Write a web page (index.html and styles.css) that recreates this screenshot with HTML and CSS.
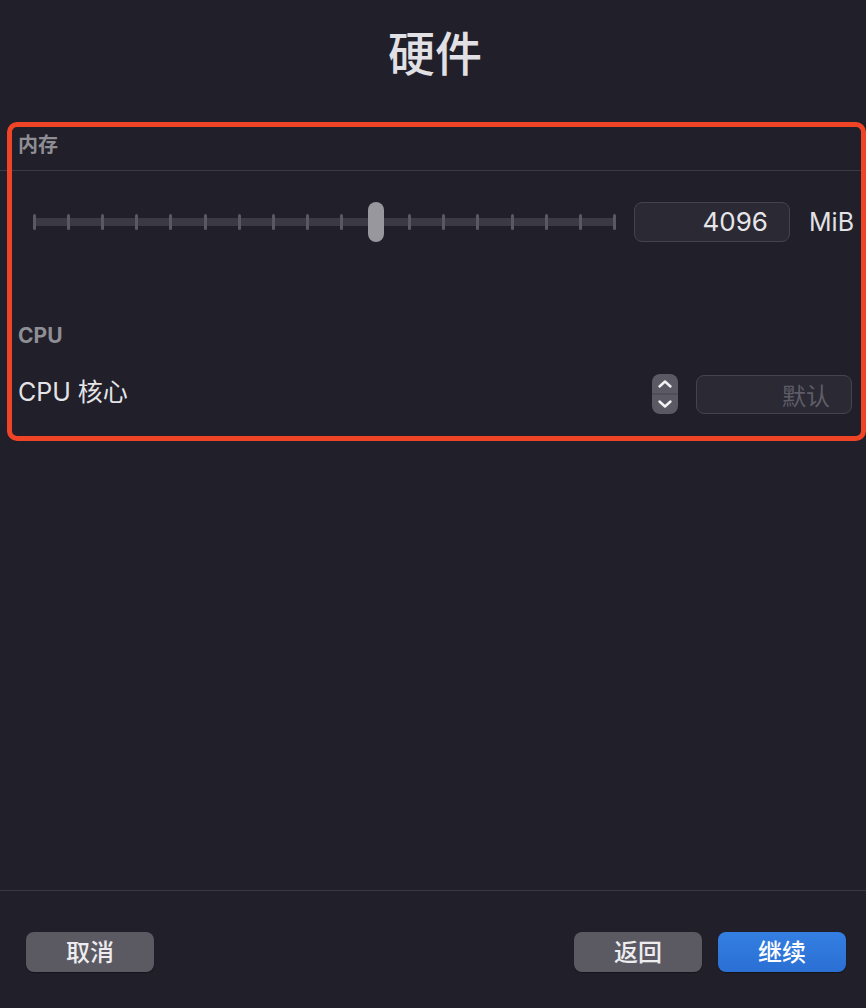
FILE: index.html
```html
<!DOCTYPE html>
<html lang="zh-CN">
<head>
<meta charset="utf-8">
<title>硬件</title>
<link rel="stylesheet" href="styles.css">
</head>
<body>
<div class="window">
  <header class="title">硬件</header>

  <section class="section-head">
    <div class="section-label">内存</div>
  </section>

  <div class="mem-row">
    <div class="slider">
      <div class="track"></div>
      <div class="ticks">
        <span class="tick"></span><span class="tick"></span><span class="tick"></span>
        <span class="tick"></span><span class="tick"></span><span class="tick"></span>
        <span class="tick"></span><span class="tick"></span><span class="tick"></span>
        <span class="tick"></span><span class="tick"></span><span class="tick"></span>
        <span class="tick"></span><span class="tick"></span><span class="tick"></span>
        <span class="tick"></span><span class="tick"></span><span class="tick"></span>
      </div>
      <div class="thumb" style="left: calc(1.5px + (100% - 3px) * 10 / 17 - 8px);"></div>
    </div>
    <div class="field field-value">4096</div>
    <div class="unit">MiB</div>
  </div>

  <div class="cpu-label">CPU</div>

  <div class="cpu-row">
    <div class="cpu-name">CPU 核心</div>
    <div class="stepper">
      <svg width="26" height="40" viewBox="0 0 26 40">
        <rect x="0" y="0" width="26" height="40" rx="8" fill="#5b5a64"/>
        <line x1="0" y1="20" x2="26" y2="20" stroke="#46454f" stroke-width="1"/>
        <path d="M7.5 12.5 L13 7.5 L18.5 12.5" fill="none" stroke="#f2f2f4" stroke-width="2.4" stroke-linecap="round" stroke-linejoin="round"/>
        <path d="M7.5 27.5 L13 32.5 L18.5 27.5" fill="none" stroke="#f2f2f4" stroke-width="2.4" stroke-linecap="round" stroke-linejoin="round"/>
      </svg>
    </div>
    <div class="field field-placeholder">默认</div>
  </div>

  <div class="spacer"></div>

  <footer class="footer">
    <button class="btn btn-gray">取消</button>
    <div class="footer-right">
      <button class="btn btn-gray">返回</button>
      <button class="btn btn-blue">继续</button>
    </div>
  </footer>

  <div class="highlight"></div>
</div>
</body>
</html>
```

FILE: styles.css
```css
* { box-sizing: border-box; }

html, body {
  margin: 0;
  padding: 0;
  height: 100%;
  background: #201f2a;
}

body {
  font-family: "Inter", "Noto Sans CJK SC", sans-serif;
  color: #e3e2e6;
}

.window {
  position: relative;
  height: 1008px;
  display: flex;
  flex-direction: column;
}

.title {
  height: 108px;
  line-height: 102px;
  text-align: center;
  font-family: "Noto Sans CJK SC", sans-serif;
  font-size: 47px;
  font-weight: 500;
  color: #e1e0e4;
  padding-left: 4px;
}

.section-head {
  height: 63px;
  display: flex;
  align-items: flex-end;
  padding: 0 0 12px 18px;
  border-bottom: 1px solid #3c3b45;
}

.section-label {
  font-family: "Noto Sans CJK SC", sans-serif;
  font-size: 20px;
  line-height: 28px;
  font-weight: 700;
  color: #8f8e94;
}

.mem-row {
  margin-top: 31px;
  height: 40px;
  display: flex;
  align-items: center;
  padding: 0 0 0 33px;
}

.slider {
  position: relative;
  flex: 0 0 583px;
  height: 40px;
}

.track {
  position: absolute;
  left: 0;
  right: 0;
  top: 16px;
  height: 8px;
  background: #3a3944;
  border-radius: 2px;
}

.ticks {
  position: absolute;
  left: 0;
  right: 0;
  top: 12px;
  height: 16px;
  display: flex;
  justify-content: space-between;
}

.tick {
  flex: 0 0 3px;
  height: 16px;
  background: #5a5963;
  border-radius: 1.5px;
}

.thumb {
  position: absolute;
  top: 0;
  width: 16px;
  height: 40px;
  border-radius: 8px;
  background: #98979d;
}

.field {
  flex: 0 0 156px;
  height: 40px;
  border: 1px solid #45444e;
  border-radius: 8px;
  background: #2a2934;
  text-align: right;
  padding-right: 21px;
  line-height: 38px;
}

.field-value {
  margin-left: 18px;
  font-size: 26px;
  color: #e6e6e8;
}

.unit {
  flex: 0 0 auto;
  margin-left: 19px;
  font-size: 25px;
  color: #e2e2e4;
}

.cpu-label {
  margin-top: 80px;
  padding-left: 18px;
  font-size: 21px;
  line-height: 28px;
  font-weight: 700;
  color: #8f8e94;
}

.cpu-row {
  margin-top: 24px;
  height: 40px;
  display: flex;
  align-items: center;
  padding: 0 14px 0 18px;
}

.cpu-name {
  flex: 1;
  font-size: 25px;
  line-height: 34px;
  padding-bottom: 4px;
  color: #e4e4e6;
}

.stepper {
  flex: 0 0 26px;
  height: 40px;
  display: flex;
}

.field-placeholder {
  margin-left: 18px;
  height: 39px;
  line-height: 37px;
  font-family: "Noto Sans CJK SC", sans-serif;
  font-size: 24px;
  color: #5e5d67;
}

.spacer { flex: 1; }

.footer {
  height: 118px;
  border-top: 1px solid #3a3942;
  display: flex;
  justify-content: space-between;
  align-items: flex-start;
  padding: 41px 20px 0 26px;
}

.footer-right {
  display: flex;
  gap: 16px;
}

.btn {
  width: 128px;
  height: 40px;
  border: none;
  border-radius: 8px;
  font-family: "Noto Sans CJK SC", sans-serif;
  font-size: 24px;
  font-weight: 500;
  color: #ededef;
  padding: 0 0 2px 0;
  line-height: 36px;
  box-shadow: 0 1px 1px rgba(0,0,0,0.35);
}

.btn-gray {
  background: #5b5a63;
}

.btn-blue {
  background: linear-gradient(#347fe2, #2b6fd3);
  color: #ffffff;
}

.highlight {
  position: absolute;
  left: 7px;
  top: 122px;
  width: 859px;
  height: 319px;
  border: 5px solid #ef4526;
  border-radius: 10px;
  pointer-events: none;
}
```
